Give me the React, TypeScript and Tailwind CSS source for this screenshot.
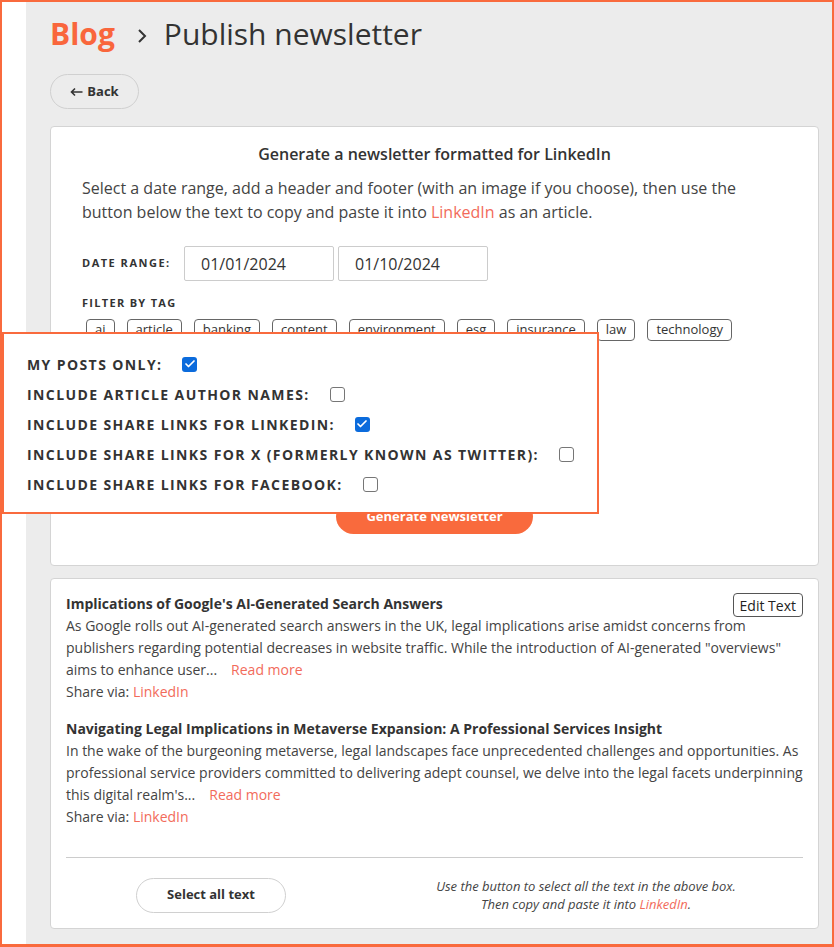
import { Check } from 'lucide-react'

const TAGS = ['ai', 'article', 'banking', 'content', 'environment', 'esg', 'insurance', 'law', 'technology']

const OPTIONS: { label: string; checked: boolean }[] = [
  { label: 'My posts only:', checked: true },
  { label: 'Include article author names:', checked: false },
  { label: 'Include share links for LinkedIn:', checked: true },
  { label: 'Include share links for X (formerly known as Twitter):', checked: false },
  { label: 'Include share links for Facebook:', checked: false },
]

const ARTICLES = [
  {
    title: "Implications of Google's AI-Generated Search Answers",
    body: 'As Google rolls out AI-generated search answers in the UK, legal implications arise amidst concerns from publishers regarding potential decreases in website traffic. While the introduction of AI-generated "overviews" aims to enhance user...',
  },
  {
    title: 'Navigating Legal Implications in Metaverse Expansion: A Professional Services Insight',
    body: "In the wake of the burgeoning metaverse, legal landscapes face unprecedented challenges and opportunities. As professional service providers committed to delivering adept counsel, we delve into the legal facets underpinning this digital realm's...",
  },
]

export default function App() {
  return (
    <div className="relative w-[834px] h-[947px] overflow-hidden border-2 border-b-[3px] border-[#f96a3d] bg-white font-['Open_Sans',sans-serif] text-[#333]">
      <div className="flex h-full">
        <div className="w-[24px] shrink-0 bg-white" />
        <main className="flex-1 bg-[#ececec] pl-[24px] pr-[13px] pt-[13px]">
          <div className="flex items-center h-[38px]">
            <span className="text-[30px] font-bold text-[#f9663c] leading-none">Blog</span>
            <svg width="12" height="18" viewBox="0 0 12 18" className="ml-[21px] mr-[16px] mt-[4px]">
              <path d="M3 3l6 6-6 6" fill="none" stroke="#333" strokeWidth="2" />
            </svg>
            <span className="text-[30px] text-[#333] leading-none">Publish newsletter</span>
          </div>

          <button className="mt-[21px] flex h-[35px] w-[89px] items-center justify-center gap-[4px] rounded-full border border-[#d0d0d0] text-[13px] font-bold text-[#333]">
            <svg width="13" height="10" viewBox="0 0 13 10">
              <path d="M12.5 5H1.5M5 1.5L1.5 5 5 8.5" fill="none" stroke="#333" strokeWidth="1.6" />
            </svg>
            Back
          </button>

          <section className="mt-[17px] h-[440px] rounded-[4px] border border-[#d4d4d4] bg-white px-[31px] pt-[15px]">
            <h2 className="text-center text-[16px] font-semibold leading-6 text-[#333]">
              Generate a newsletter formatted for LinkedIn
            </h2>
            <p className="mt-[10px] text-[16px] leading-6 text-[#444]">
              Select a date range, add a header and footer (with an image if you choose), then use the button below
              the text to copy and paste it into <span className="text-[#f26b5b]">LinkedIn</span> as an article.
            </p>

            <div className="mt-[22px] flex items-center">
              <span className="w-[102px] text-[11px] font-bold uppercase tracking-[1.5px] text-[#333]">Date range:</span>
              <div className="flex h-[35px] w-[150px] items-center rounded-[2px] border border-[#ccc] pl-[16px] text-[16px] text-[#333]">
                01/01/2024
              </div>
              <div className="ml-[4px] flex h-[35px] w-[150px] items-center rounded-[2px] border border-[#ccc] pl-[16px] text-[16px] text-[#333]">
                01/10/2024
              </div>
            </div>

            <div className="mt-[14px] text-[11px] font-bold uppercase leading-4 tracking-[1.3px] text-[#333]">
              Filter by tag
            </div>
            <div className="mt-[8px] ml-[4px] flex gap-x-[12px]">
              {TAGS.map((t) => (
                <span
                  key={t}
                  className="flex h-[22px] items-center rounded-[4px] border border-[#666] px-[8px] text-[13px] text-[#333]"
                >
                  {t}
                </span>
              ))}
            </div>

            <div className="h-[158px]" />
            <div className="flex justify-center">
              <button className="h-[35px] w-[197px] rounded-full bg-[#f96a3d] text-[13px] font-bold text-white">
                Generate Newsletter
              </button>
            </div>
          </section>

          <section className="mt-[12px] h-[351px] rounded-[4px] border border-[#d4d4d4] bg-white px-[15px] pt-[14px]">
            {ARTICLES.map((a, i) => (
              <article key={a.title} className={i > 0 ? 'mt-[15px]' : ''}>
                <div className="flex items-start justify-between">
                  <h3 className="text-[14px] font-bold leading-[22px] text-[#333]">{a.title}</h3>
                  {i === 0 && (
                    <button className="-mb-[2px] h-[24px] rounded-[4px] border border-[#555] px-[6px] text-[14px] text-[#222]">
                      Edit Text
                    </button>
                  )}
                </div>
                <p className="text-[14px] leading-[22px] text-[#444]">
                  {a.body}
                  <span className="ml-[14px] text-[#f26b5b]">Read more</span>
                </p>
                <p className="text-[14px] leading-[22px] text-[#444]">
                  Share via: <span className="text-[#f26b5b]">LinkedIn</span>
                </p>
              </article>
            ))}

            <div className="mt-[29px] border-t border-[#ccc]" />
            <div className="mt-[19px] flex items-center">
              <div className="w-[290px] flex justify-center">
                <button className="h-[35px] w-[150px] rounded-full border border-[#d0d0d0] text-[13px] font-bold text-[#333]">
                  Select all text
                </button>
              </div>
              <p className="ml-[80px] w-[300px] text-center text-[13px] italic leading-[18px] text-[#444]">
                Use the button to select all the text in the above box.
                <br />
                Then copy and paste it into <span className="text-[#f26b5b]">LinkedIn</span>.
              </p>
            </div>
          </section>
        </main>
      </div>

      {/* options callout laid over the first card */}
      <div className="absolute left-0 top-[330px] w-[597px] h-[182px] border-2 border-[#f96a3d] bg-white pl-[23px] pt-[15px]">
        {OPTIONS.map((o) => (
          <div key={o.label} className="flex h-[30px] items-center">
            <span className="text-[14px] font-bold uppercase tracking-[1.4px] text-[#333]">{o.label}</span>
            {o.checked ? (
              <span className="ml-[20px] flex h-[15px] w-[15px] items-center justify-center rounded-[3px] bg-[#0b6bdc]">
                <Check size={12} strokeWidth={3.5} color="#fff" />
              </span>
            ) : (
              <span className="ml-[20px] h-[15px] w-[15px] rounded-[3px] border border-[#767676] bg-white" />
            )}
          </div>
        ))}
      </div>
    </div>
  )
}
